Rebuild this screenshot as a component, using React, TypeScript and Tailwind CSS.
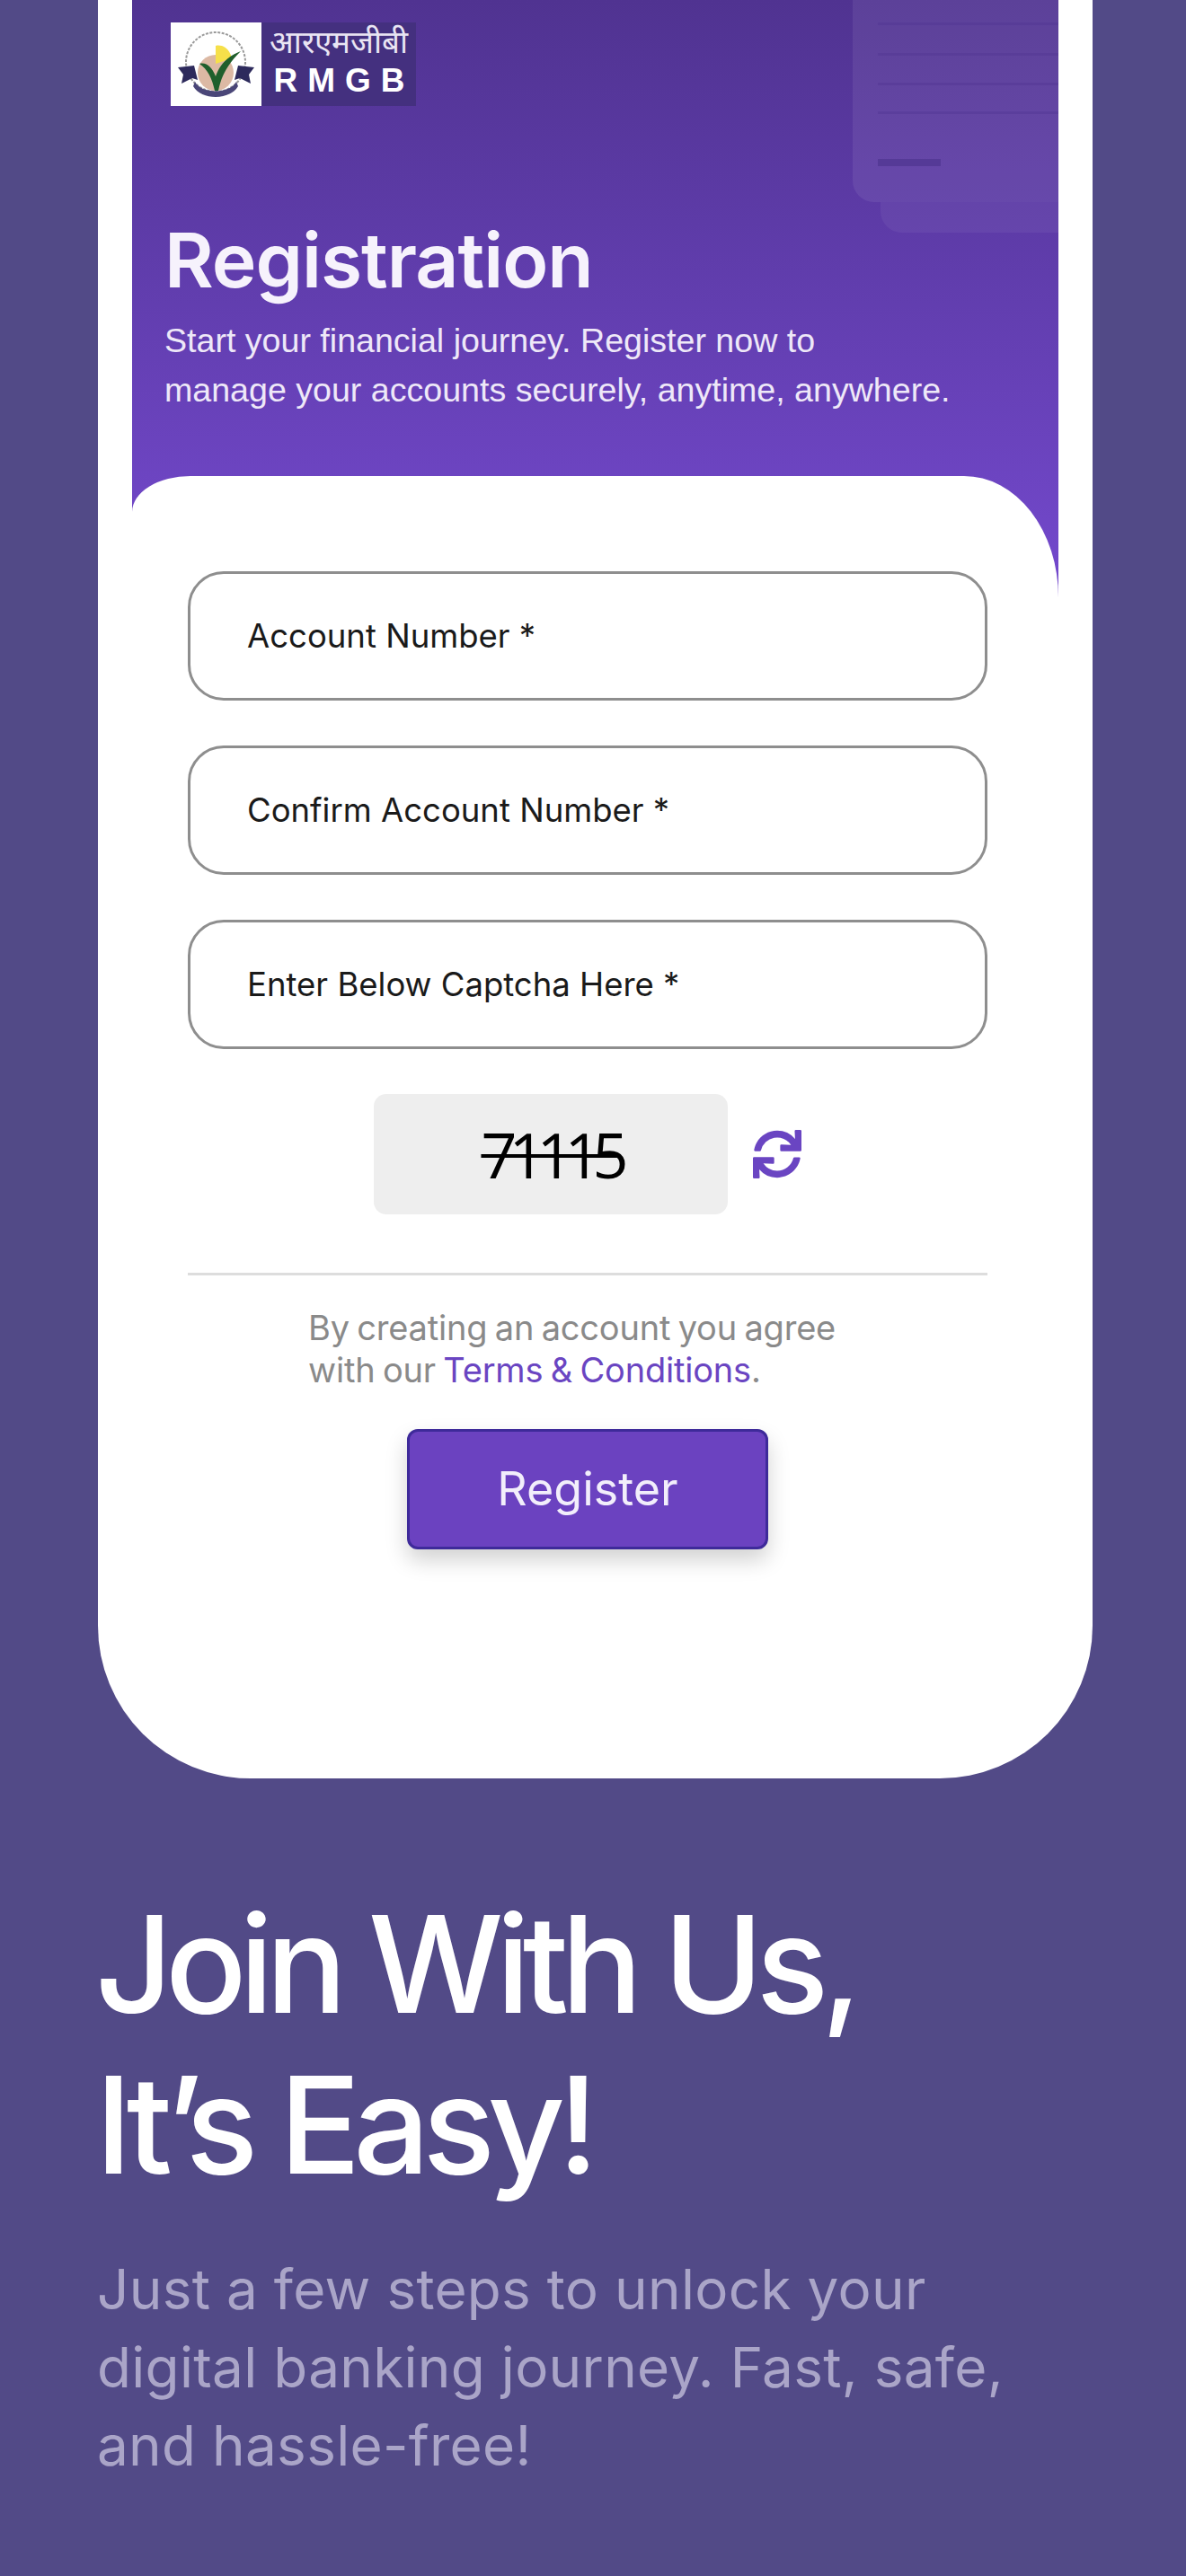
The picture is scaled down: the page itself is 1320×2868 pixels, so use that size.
import { FaSync } from "react-icons/fa";

const fields = ["Account Number *", "Confirm Account Number *", "Enter Below Captcha Here *"];

function Emblem() {
  return (
    <svg viewBox="0 0 101 93" className="h-[93px] w-[101px]">
      <rect width="101" height="93" fill="#ffffff" />
      <circle cx="50" cy="44" r="33" fill="none" stroke="#9a9a9a" strokeWidth="2" strokeDasharray="3 1.5" />
      <circle cx="50" cy="56" r="20" fill="#dcb9a4" />
      <path d="M50 26 C58 24 66 30 68 40 L50 46 Z" fill="#f6e04a" />
      <path d="M8 50 L26 48 L30 64 L24 62 L12 68 L14 58 Z" fill="#2d2a5c" />
      <path d="M93 50 L75 48 L71 64 L77 62 L89 68 L87 58 Z" fill="#2d2a5c" />
      <path d="M27 66 C34 80 66 80 73 66 L75 71 C66 87 34 87 25 71 Z" fill="#4a4678" />
      <path d="M32 46 C40 44 46 50 50 60 C54 48 62 38 78 32 C66 44 57 56 53 76 L49 76 C46 62 41 52 32 46 Z" fill="#1f5f2c" />
    </svg>
  );
}

function Logo() {
  return (
    <div className="ml-[43px] flex h-[93px] w-[273px] bg-[#44307f]">
      <Emblem />
      <div className="flex flex-1 flex-col items-center text-white">
        <span className="font-['Liberation_Serif',serif] text-[35px] leading-[45px] text-[#e9e5f3]">आरएमजीबी</span>
        <span className="pl-[12px] font-['Liberation_Sans',sans-serif] text-[37px] font-bold leading-[40px] tracking-[11px]">RMGB</span>
      </div>
    </div>
  );
}

export default function App() {
  return (
    <div className="h-[2868px] w-[1320px] overflow-hidden bg-[#524a87] font-['Inter',sans-serif]">
      {/* phone */}
      <div className="mx-[109px] h-[1980px] w-[1107px] overflow-hidden rounded-b-[170px] bg-white px-[38px]">
        <div className="relative h-[670px] overflow-hidden bg-gradient-to-b from-[#503391] to-[#7449ce] pt-[25px]">
          {/* faint cards behind the header */}
          <div className="absolute right-0 top-[225px] h-[34px] w-[198px] rounded-bl-[24px] bg-white/[0.05]" />
          <div className="absolute right-0 top-[-20px] flex h-[245px] w-[229px] flex-col rounded-bl-[24px] bg-white/[0.07] pl-[28px] pt-[45px]">
            <div className="h-[3px] bg-[#4f3590]/40" />
            <div className="mt-[31px] h-[3px] bg-[#4f3590]/40" />
            <div className="mt-[30px] h-[3px] bg-[#4f3590]/40" />
            <div className="mt-[29px] h-[3px] bg-[#4f3590]/40" />
            <div className="mt-[50px] h-[8px] w-[70px] bg-[#4f3590]/70" />
          </div>
          <Logo />
          <h1 className="relative ml-[36px] mt-[125px] text-[84px] font-semibold leading-[93px] tracking-[-1px] text-[#f6f2fc]">Registration</h1>
          <p className="relative ml-[36px] mt-[16px] font-['Liberation_Sans',sans-serif] text-[37.6px] leading-[55px] text-[#eee8f8]">
            Start your financial journey. Register now to
            <br />
            manage your accounts securely, anytime, anywhere.
          </p>
        </div>

        {/* form card */}
        <div className="relative -mt-[140px] rounded-tl-[65px_40px] rounded-tr-[105px_135px] bg-white pl-[62px] pt-[106px]">
          <div className="flex w-[890px] flex-col items-center">
            <div className="flex w-full flex-col gap-[50px]">
              {fields.map((f) => (
                <div key={f} className="flex h-[144px] items-center rounded-[40px] border-[3px] border-[#8e8e8e] pl-[63px] text-[36.5px] font-normal text-[#1a1a1a]">
                  {f}
                </div>
              ))}
            </div>

            <div className="mt-[50px] flex items-center gap-[28px] self-start pl-[207px]">
              <div className="flex h-[134px] w-[394px] items-center justify-center rounded-[14px] bg-[#eeeeee] font-['Open_Sans',sans-serif] text-[70px] tracking-[-9px] text-black line-through decoration-[4px]">
                71115
              </div>
              <FaSync className="h-[54px] w-[54px] text-[#6a45c2]" />
            </div>

            <div className="mt-[65px] h-[3px] w-full bg-[#dddddd]" />

            <p className="mt-[35px] self-start pl-[134px] text-[38px] leading-[47px] tracking-[-0.2px] text-[#8a8a8a] [word-spacing:-2px]">
              By creating an account you agree
              <br />
              with our <span className="text-[#6a45c2]">Terms &amp; Conditions</span>.
            </p>

            <div className="mt-[42px] flex h-[134px] w-[402px] items-center justify-center rounded-[12px] border-[3px] border-[#3e2a9a] bg-[#6b42c0] text-[52px] text-[#f2eefb] shadow-[0_12px_24px_rgba(0,0,0,0.18)]">
              Register
            </div>
          </div>
        </div>
      </div>

      {/* copy */}
      <div className="px-[109px]">
        <h2 className="-ml-[3px] mt-[117px] text-[150px] font-medium leading-[179px] tracking-[-8.2px] text-white">
          Join With Us,
          <br />
          It’s Easy!
        </h2>
        <p className="-ml-[1px] mt-[50px] text-[62px] leading-[87px] tracking-[0.3px] text-[#aaa5c8]">
          Just a few steps to unlock your
          <br />
          digital banking journey. Fast, safe,
          <br />
          and hassle-free!
        </p>
      </div>
    </div>
  );
}
